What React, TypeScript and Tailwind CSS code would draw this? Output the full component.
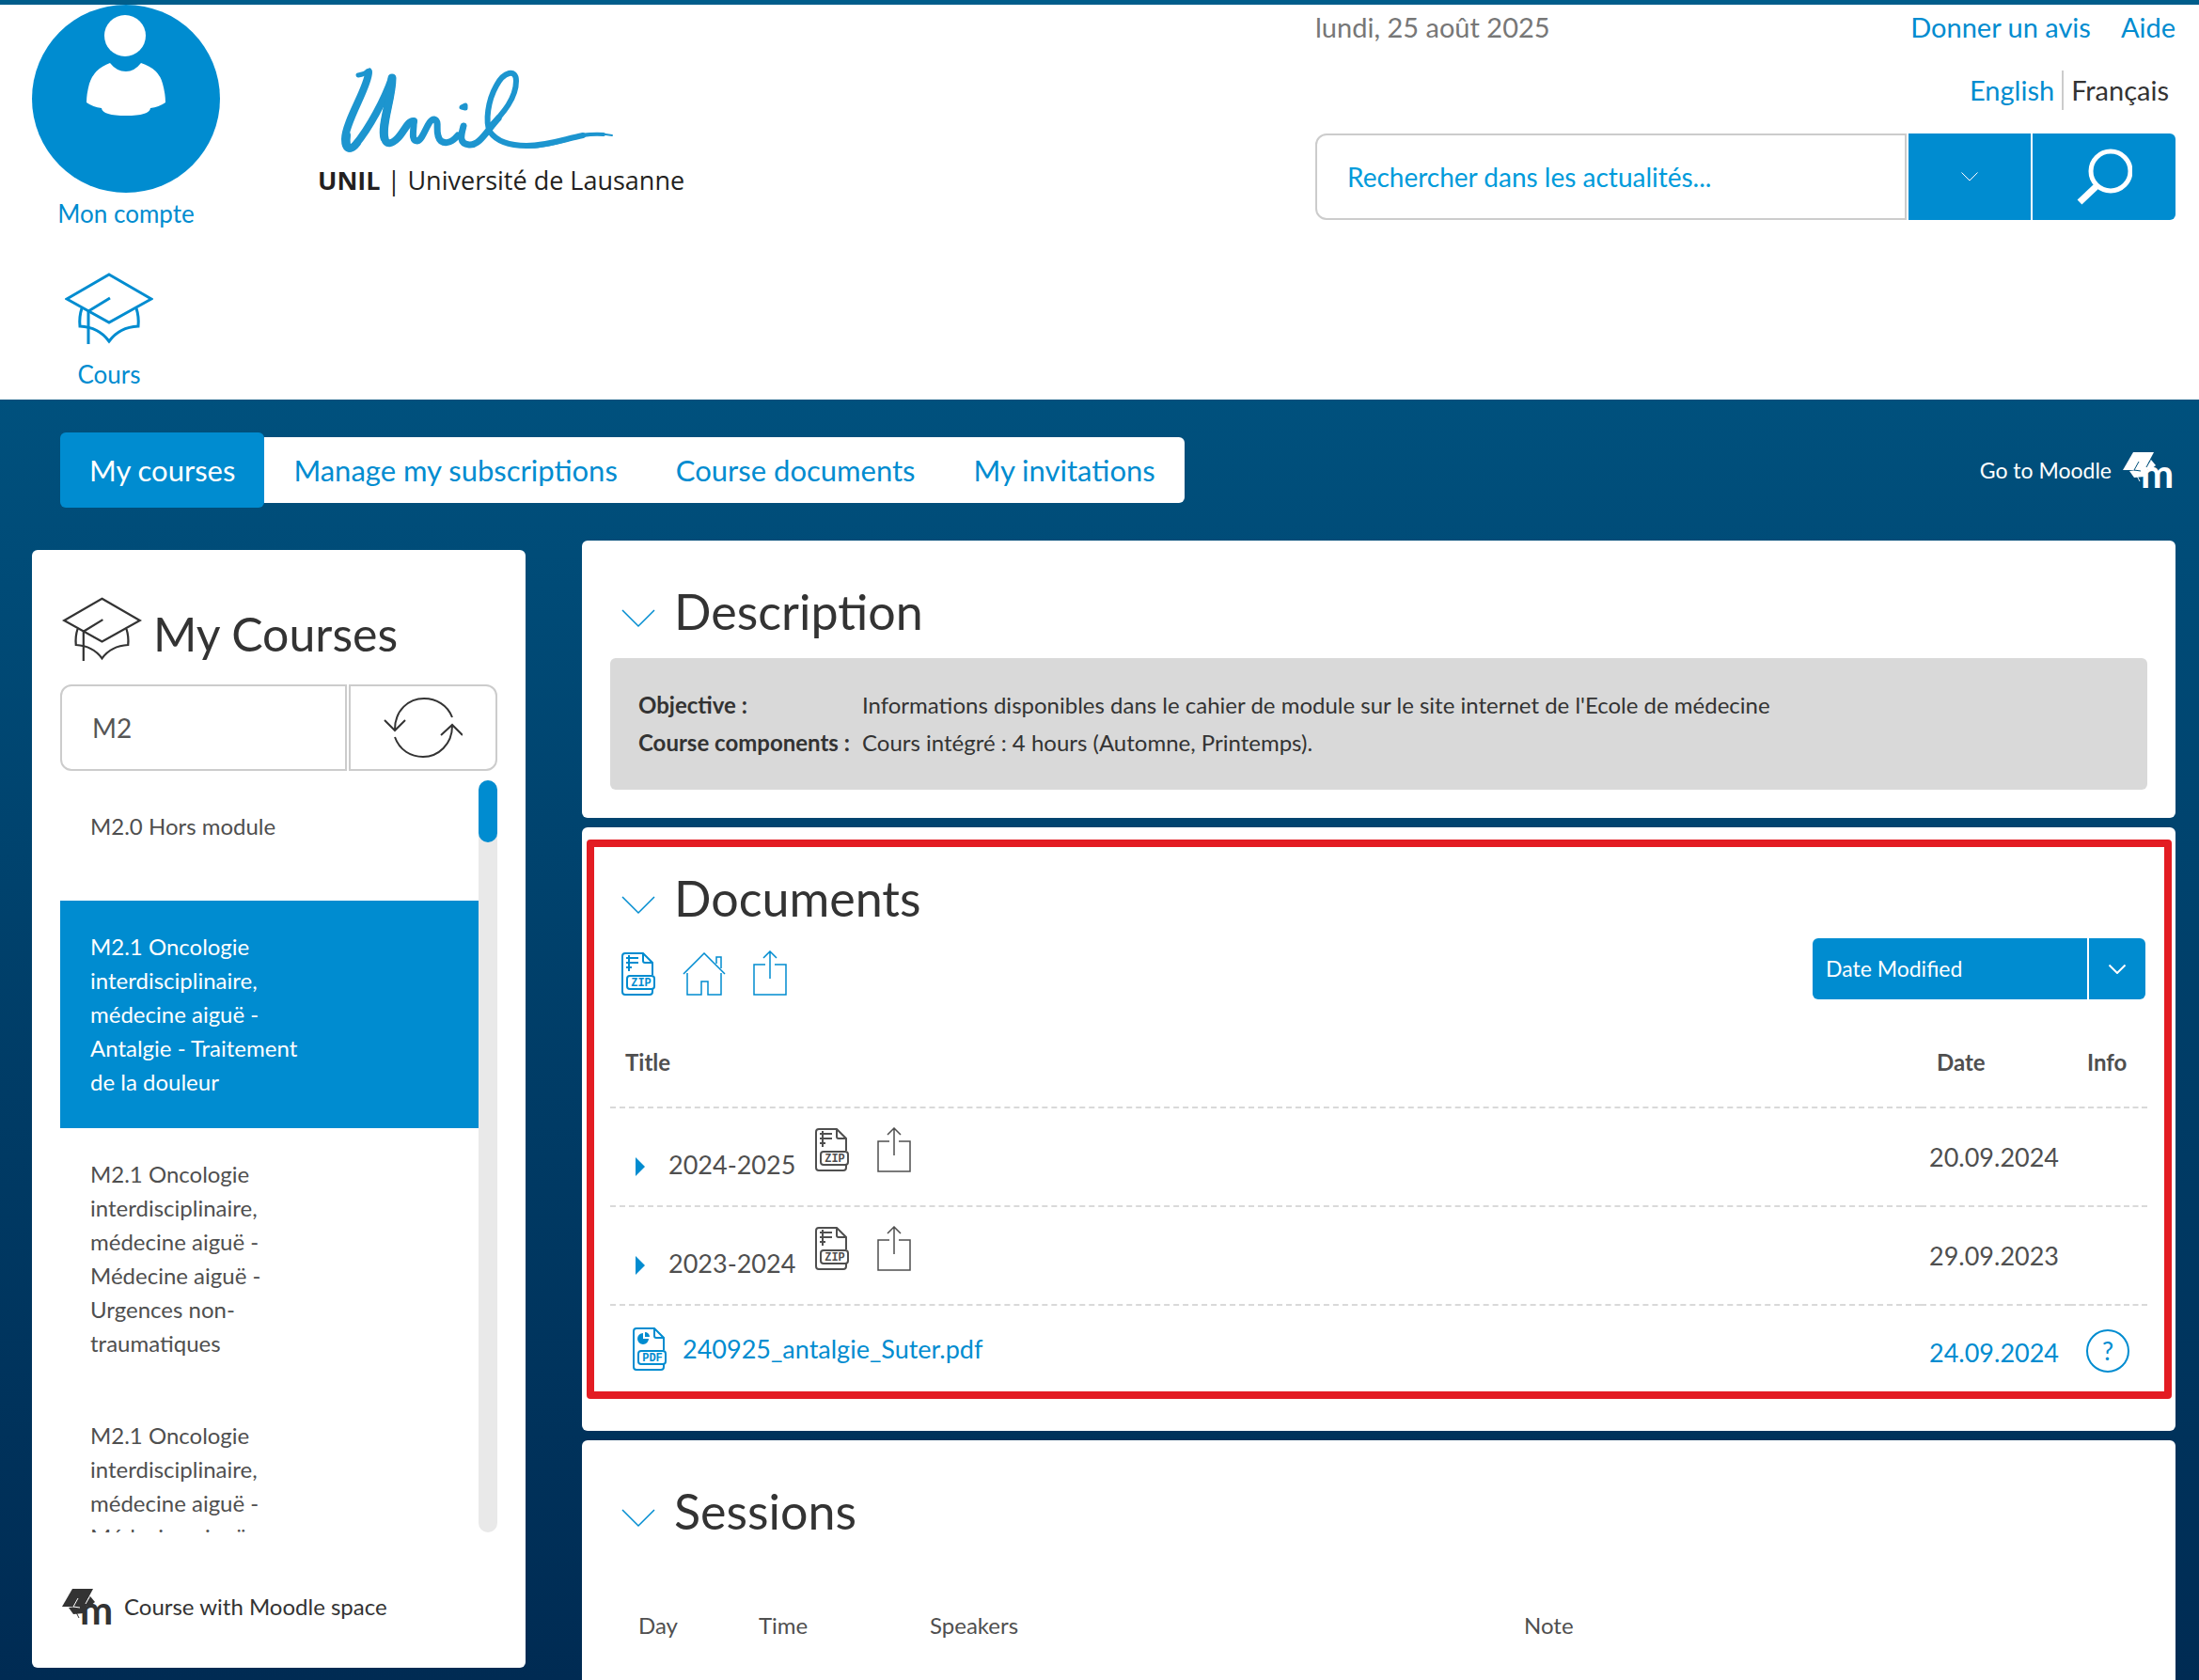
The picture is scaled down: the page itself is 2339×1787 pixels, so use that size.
import { useState } from 'react';

interface Course {
  id: number;
  title: string;
}

interface Folder {
  name: string;
  date: string;
}

const courses: Course[] = [
  { id: 1, title: 'M2.0 Hors module' },
  { id: 2, title: 'M2.1 Oncologie interdisciplinaire, médecine aiguë - Antalgie - Traitement de la douleur' },
  { id: 3, title: 'M2.1 Oncologie interdisciplinaire, médecine aiguë - Médecine aiguë - Urgences non-traumatiques' },
  { id: 4, title: 'M2.1 Oncologie interdisciplinaire, médecine aiguë - Médecine aiguë -' },
];

const folders: Folder[] = [
  { name: '2024-2025', date: '20.09.2024' },
  { name: '2023-2024', date: '29.09.2023' },
];

const tabs = ['My courses', 'Manage my subscriptions', 'Course documents', 'My invitations'];

function HatIcon({ className, strokeWidth }: { className: string; strokeWidth: number }) {
  return (
    <svg viewBox="0 0 94 76" className={className} fill="none" stroke="currentColor" strokeWidth={strokeWidth}>
      <path d="M47 2 92 28 47 53 2 28Z" />
      <path d="M48 27 25 41V76" />
      <path d="M18 38Q15 47 16 57Q36 58 47 73Q58 58 78 57Q79 47 76 38" />
    </svg>
  );
}

function MoodleIcon({ cut }: { cut: string }) {
  return (
    <svg viewBox="0 0 56 38" className="h-[38px] w-14 overflow-visible" fill="currentColor">
      <path d="M11 0H33L23 19H0Z" />
      <path d="M7 20 23 18V26L12 27Z" />
      <path d="M30 8 35 14 28 20 24 16Z" />
      <path d="M14 23 18 31" fill="none" stroke="currentColor" strokeWidth="1" />
      <path d="M17 10 12 19 19 20M29 9 25 16" fill="none" stroke={cut} strokeWidth="1" />
      <text x="19" y="38" fontSize="42" fontWeight="700">m</text>
    </svg>
  );
}

function Chevron({ className, strokeWidth }: { className: string; strokeWidth: number }) {
  return (
    <svg viewBox="0 0 36 20" className={className} fill="none" stroke="currentColor" strokeWidth={strokeWidth}>
      <path d="M1 1 18 18 35 1" />
    </svg>
  );
}

function FileIcon({ type }: { type: 'ZIP' | 'PDF' }) {
  return (
    <svg viewBox="0 0 36 46" className="h-[46px] w-9" fill="none" stroke="currentColor" strokeWidth="2">
      <path d="M33 24V11L23 1H4Q1 1 1 4V42Q1 45 4 45H30Q33 45 33 42V39" />
      <path d="M23 1V9Q23 11 25 11H33" />
      {type === 'ZIP' ? (
        <path d="M8 3V20M5 6H18M5 11H18M5 16H11" strokeWidth="2" />
      ) : (
        <>
          <path d="M11 6V12H17A6 6 0 1 1 11 6Z" fill="currentColor" stroke="none" />
          <path d="M13 5V10H18A5 5 0 0 0 13 5Z" fill="currentColor" stroke="none" />
        </>
      )}
      <rect x="6" y="25" width="29" height="14" rx="3" />
      <text
        x="21"
        y="36"
        textAnchor="middle"
        fontSize="12"
        fontWeight="700"
        fill="currentColor"
        stroke="none"
        className="font-['Liberation_Mono',monospace]"
      >
        {type}
      </text>
    </svg>
  );
}

function HomeIcon() {
  return (
    <svg viewBox="0 0 46 46" className="size-[46px]" fill="none" stroke="currentColor" strokeWidth="1.5">
      <path d="M1 23 23 1 45 23" />
      <path d="M5 22V45H20V31H27V45H41V22" />
      <path d="M36 12V5H41V17" />
    </svg>
  );
}

function ShareIcon() {
  return (
    <svg viewBox="0 0 36 48" className="h-12 w-9" fill="none" stroke="currentColor" strokeWidth="1.5">
      <path d="M13 15H1V47H35V15H23" />
      <path d="M18 30V1M11 8 18 1 25 8" />
    </svg>
  );
}

function SectionTitle({ title }: { title: string }) {
  return (
    <div className="flex items-center gap-5 pl-3">
      <button type="button" aria-label={`Toggle ${title}`} className="pt-4 text-[#008cd0]">
        <Chevron className="h-5 w-9" strokeWidth={1.5} />
      </button>
      <h2 className="text-[52px] leading-[60px] text-[#333]">{title}</h2>
    </div>
  );
}

function Header() {
  return (
    <header className="flex bg-white pr-[25px] pl-[34px]">
      <nav className="w-[200px] text-[26px] leading-9 text-[#008cd0]">
        <a href="#compte" className="flex flex-col items-center gap-1">
          <svg viewBox="0 0 200 200" className="size-[200px]">
            <circle cx="100" cy="100" r="100" fill="#008cd0" />
            <circle cx="99" cy="33" r="22" fill="#fff" />
            <path
              fill="#fff"
              d="M83 62Q90 71 100 71Q109 71 116 62Q135 68 139 84Q142 95 142 104Q135 109 126 110Q125 118 100 118Q75 118 74 110Q65 109 58 104Q58 95 61 84Q66 68 83 62Z"
            />
          </svg>
          <span>Mon compte</span>
        </a>
        <a href="#cours" className="mt-[45px] flex w-[164px] flex-col items-center gap-[14px] pb-[9px]">
          <HatIcon className="h-[76px] w-[94px]" strokeWidth={3} />
          <span>Cours</span>
        </a>
      </nav>

      <a href="#unil" className="ml-[104px] pt-[59px] font-['Open_Sans',sans-serif] text-[27px] leading-9 text-[#231f20]">
        <svg
          viewBox="0 0 330 104"
          className="h-[104px] w-[330px]"
          fill="none"
          stroke="#1d95cf"
          strokeLinecap="round"
          strokeLinejoin="round"
        >
          <path strokeWidth="5" d="M43 16Q50 15 55 11" />
          <path strokeWidth="8" d="M54 13C54 28 29 66 29 84C29 94 33 97 40 90C55 72 71 42 79 19" />
          <path strokeWidth="9" d="M79 19C79 40 67 70 71 83" />
          <path strokeWidth="8" d="M31 80C29 96 35 97 42 88" />
          <path strokeWidth="8" d="M79 19C79 40 67 70 71 83C73 91 79 89 85 83C92 76 96 64 102 65" />
          <path strokeWidth="7" d="M102 65C103 72 98 86 106 86C113 84 117 62 124 63C131 65 123 78 131 86C137 90 144 86 149 80" />
          <path strokeWidth="7" d="M155 70C153 78 149 89 161 90C172 91 180 75 192 62" />
          <path strokeWidth="6" d="M182 72C198 56 211 40 211 22C211 9 198 12 190 27C181 43 178 65 183 76" />
          <path strokeWidth="6" d="M183 76C190 86 202 91 222 91C245 91 262 84 282 80" />
          <path strokeWidth="4" d="M222 92C245 92 262 85 282 80Q294 78 304 79" />
          <path strokeWidth="2" d="M280 79Q300 77 313 80" />
          <path strokeWidth="5" d="M153 50 157 48V51Z" />
        </svg>
        <div className="pt-[6px]">
          <span className="font-bold">UNIL</span> | Université de Lausanne
        </div>
      </a>

      <div className="ml-auto w-[915px] pt-[6px] text-[29px]">
        <div className="flex justify-between leading-9">
          <span className="text-[#777]">lundi, 25 août 2025</span>
          <div className="flex gap-8 text-[#008cd0]">
            <a href="#avis">Donner un avis</a>
            <a href="#aide">Aide</a>
          </div>
        </div>
        <div className="mt-7 flex justify-end pr-[7px] leading-[42px]">
          <a href="#en" className="border-r-2 border-[#ccc] pr-2 text-[#008cd0]">English</a>
          <span className="pl-2 text-[#333]">Français</span>
        </div>
        <form className="mt-[25px] flex h-[92px] gap-[2px] text-[#008cd0]">
          <input
            type="text"
            aria-label="Rechercher"
            placeholder="Rechercher dans les actualités..."
            className="min-w-0 flex-1 rounded-l-xl border-2 border-[#ccc] px-8 text-[28px] placeholder:text-[#009bdb]"
          />
          <button type="button" aria-label="Options" className="flex w-[130px] items-center justify-center bg-[#008cd0] text-white">
            <Chevron className="h-[10px] w-[18px]" strokeWidth={2} />
          </button>
          <button type="submit" aria-label="Chercher" className="flex w-[152px] items-center justify-center rounded-r-md bg-[#008cd0] text-white">
            <svg viewBox="0 0 60 60" className="size-[60px]" fill="none" stroke="currentColor">
              <circle cx="37" cy="24" r="21" strokeWidth="5" />
              <path d="M22 40 4 57" strokeWidth="7" />
            </svg>
          </button>
        </form>
      </div>
    </header>
  );
}

function Sidebar() {
  const [query, setQuery] = useState('M2');
  const [selected, setSelected] = useState(2);

  return (
    <aside className="mt-[10px] self-start rounded-md bg-white px-[30px] pb-[44px]">
      <div className="flex h-[143px] gap-3 pt-[50px] pl-[2px] text-[#333]">
        <HatIcon className="h-[68px] w-[85px]" strokeWidth={2.5} />
        <h2 className="pt-[9px] text-[50px] leading-[60px]">My Courses</h2>
      </div>
      <div className="flex h-[92px] gap-[2px]">
        <input
          type="text"
          aria-label="Filter courses"
          value={query}
          onChange={(e) => setQuery(e.target.value)}
          className="min-w-0 flex-1 rounded-l-xl border-2 border-[#ccc] px-8 text-[28px] text-[#555]"
        />
        <button
          type="button"
          aria-label="Refresh"
          className="flex w-[158px] items-center justify-center rounded-r-xl border-2 border-[#ccc] text-[#333]"
        >
          <svg viewBox="0 0 84 66" className="h-[66px] w-[84px]" fill="none" stroke="currentColor" strokeWidth="2">
            <path d="M73 22C68 9 56 2 43 2C27 2 12 14 12 35M1 25 12 36 23 25" />
            <path d="M12 43C17 57 29 64 42 64C58 64 73 51 73 31M61 41 73 30 84 41" />
          </svg>
        </button>
      </div>

      <div className="mt-[10px] flex h-[800px]">
        <ul className="flex-1 overflow-hidden text-2xl leading-9 text-[#4f4f4f]">
          {courses.map((course) => (
            <li key={course.id}>
              <button
                type="button"
                onClick={() => setSelected(course.id)}
                className={`flex min-h-32 w-full items-start px-8 py-[31px] text-left leading-9 ${
                  course.id === selected ? 'bg-[#008cd0] text-white' : ''
                }`}
              >
                <span className="w-[236px]">{course.title}</span>
              </button>
            </li>
          ))}
        </ul>
        <div className="w-5 rounded-full bg-[#e9e9e9]">
          <div className="h-[66px] rounded-full bg-[#008cd0]" />
        </div>
      </div>

      <div className="mt-[58px] flex items-center gap-[10px] pl-[2px] text-2xl leading-[42px] text-[#333]">
        <MoodleIcon cut="#fff" />
        <span>Course with Moodle space</span>
      </div>
    </aside>
  );
}

function Documents() {
  return (
    <section className="relative rounded-md bg-white px-[30px] pt-[45px] pb-[34px]">
      <div className="pointer-events-none absolute top-[13px] right-1 bottom-[34px] left-[5px] rounded-sm border-8 border-[#e31c23]" />
      <SectionTitle title="Documents" />

      <div className="mt-[13px] flex items-end justify-between text-[#008cd0]">
        <div className="flex items-end gap-[29px] pb-1 pl-3">
          <button type="button" aria-label="Download ZIP"><FileIcon type="ZIP" /></button>
          <button type="button" aria-label="Home"><HomeIcon /></button>
          <button type="button" aria-label="Share"><ShareIcon /></button>
        </div>
        <div className="relative mr-[2px] flex h-[65px] w-[354px] text-white">
          <select
            aria-label="Sort by"
            className="w-full appearance-none rounded-md bg-[#008cd0] px-[14px] text-[23px]"
          >
            <option>Date Modified</option>
            <option>Title</option>
          </select>
          <div className="pointer-events-none absolute inset-y-0 right-0 flex w-[62px] items-center justify-center border-l-2 border-white">
            <Chevron className="h-[10px] w-[18px]" strokeWidth={4} />
          </div>
        </div>
      </div>

      <table className="mt-[19px] w-full table-fixed text-[#4f4f4f]">
        <thead>
          <tr className="h-24 text-left text-2xl">
            <th className="pl-4 font-bold">Title</th>
            <th className="w-[159px] pl-[17px] font-bold">Date</th>
            <th className="w-[82px] pl-[18px] font-bold">Info</th>
          </tr>
        </thead>
        <tbody className="text-[27px] leading-9">
          {folders.map((folder) => (
            <tr key={folder.name} className="h-[105px]">
              <td className="border-t-2 border-dashed border-[#d9d9d9] pl-[27px]">
                <div className="flex items-center">
                  <button type="button" aria-label={`Open ${folder.name}`} className="pt-5 text-[#008cd0]">
                    <svg viewBox="0 0 10 20" className="h-5 w-[10px]" fill="currentColor">
                      <path d="M0 0 10 10 0 20Z" />
                    </svg>
                  </button>
                  <span className="w-[163px] pt-4 pl-[25px] whitespace-nowrap">{folder.name}</span>
                  <div className="flex items-center gap-[30px] pb-4 pl-[18px]">
                    <button type="button" aria-label="Download ZIP"><FileIcon type="ZIP" /></button>
                    <button type="button" aria-label="Share"><ShareIcon /></button>
                  </div>
                </div>
              </td>
              <td className="border-t-2 border-dashed border-[#d9d9d9] pl-[9px]">{folder.date}</td>
              <td className="border-t-2 border-dashed border-[#d9d9d9]" />
            </tr>
          ))}
          <tr className="h-[100px] text-[#008cd0]">
            <td className="border-t-2 border-dashed border-[#d9d9d9] pl-6">
              <a href="#pdf" className="flex items-center gap-[17px] pb-2">
                <FileIcon type="PDF" />
                <span>240925_antalgie_Suter.pdf</span>
              </a>
            </td>
            <td className="border-t-2 border-dashed border-[#d9d9d9] pl-[9px]">24.09.2024</td>
            <td className="border-t-2 border-dashed border-[#d9d9d9] pb-1 pl-[17px]">
              <button
                type="button"
                aria-label="Info"
                className="flex size-[46px] items-center justify-center rounded-full border-2 border-[#008cd0]"
              >
                ?
              </button>
            </td>
          </tr>
        </tbody>
      </table>
    </section>
  );
}

export default function App() {
  return (
    <div className="flex min-h-screen flex-col bg-linear-to-b from-[#005d8b] to-[#002b53] pt-[5px] font-['Lato',sans-serif]">
      <Header />

      <main className="flex flex-1 flex-col pr-[25px] pl-[34px]">
        <div className="flex h-[150px] items-center justify-between">
          <nav className="flex items-center pl-[30px] text-[31px] leading-[70px]">
            {tabs.map((tab, i) => (
              <a
                key={tab}
                href="#tab"
                className={
                  i === 0
                    ? 'rounded-md bg-[#008cd0] px-[31px] leading-[80px] text-white'
                    : 'bg-white px-[31px] text-[#008cd0] last:rounded-r-md'
                }
              >
                {tab}
              </a>
            ))}
          </nav>
          <a href="#moodle" className="flex items-center gap-3 text-[23px] text-white">
            Go to Moodle
            <MoodleIcon cut="#00507b" />
          </a>
        </div>

        <div className="grid flex-1 grid-cols-[525px_minmax(0,1fr)] gap-[60px]">
          <Sidebar />

          <div className="flex flex-col gap-[10px]">
            <section className="rounded-md bg-white px-[30px] pt-[45px] pb-[30px]">
              <SectionTitle title="Description" />
              <dl className="mt-5 grid grid-cols-[238px_1fr] rounded-md bg-[#d9d9d9] p-[30px] text-2xl leading-10 text-[#333]">
                <dt className="font-bold whitespace-nowrap">Objective :</dt>
                <dd>Informations disponibles dans le cahier de module sur le site internet de l'Ecole de médecine</dd>
                <dt className="font-bold whitespace-nowrap">Course components :</dt>
                <dd>Cours intégré : 4 hours (Automne, Printemps).</dd>
              </dl>
            </section>

            <Documents />

            <section className="flex-1 rounded-t-md bg-white px-[30px] pt-[45px]">
              <SectionTitle title="Sessions" />
              <table className="mt-[74px] w-full table-fixed text-2xl text-[#4f4f4f]">
                <thead>
                  <tr className="text-left leading-9">
                    <th className="w-[128px] pl-[30px] font-normal">Day</th>
                    <th className="w-[182px] pl-[30px] font-normal">Time</th>
                    <th className="w-[632px] pl-[30px] font-normal">Speakers</th>
                    <th className="pl-[30px] font-normal">Note</th>
                  </tr>
                </thead>
              </table>
            </section>
          </div>
        </div>
      </main>
    </div>
  );
}
